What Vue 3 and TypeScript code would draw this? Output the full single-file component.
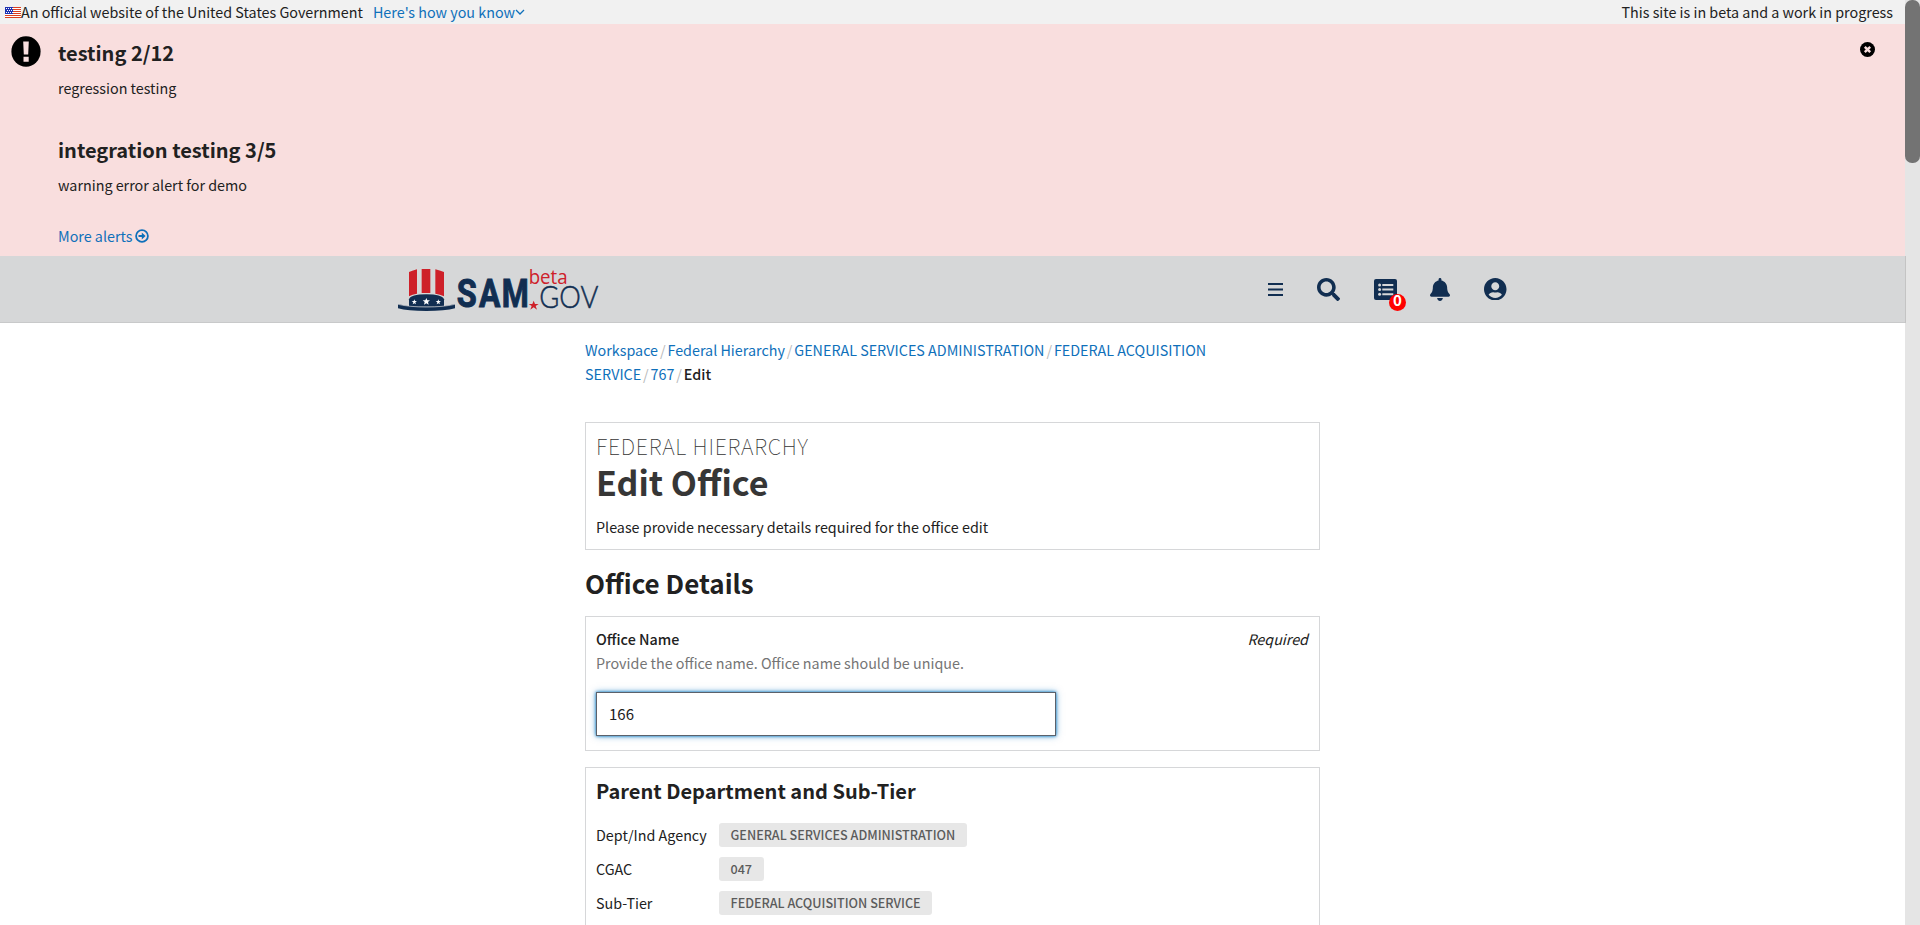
<script setup lang="ts">
interface Crumb {
  label: string
  current?: boolean
}
interface Alert {
  title: string
  text: string
}
interface Field {
  label: string
  value: string
}

const alerts: Alert[] = [
  { title: 'testing 2/12', text: 'regression testing' },
  { title: 'integration testing 3/5', text: 'warning error alert for demo' },
]

const crumbs: Crumb[] = [
  { label: 'Workspace' },
  { label: 'Federal Hierarchy' },
  { label: 'GENERAL SERVICES ADMINISTRATION' },
  { label: 'FEDERAL ACQUISITION SERVICE' },
  { label: '767' },
  { label: 'Edit', current: true },
]

const parents: Field[] = [
  { label: 'Dept/Ind Agency', value: 'GENERAL SERVICES ADMINISTRATION' },
  { label: 'CGAC', value: '047' },
  { label: 'Sub-Tier', value: 'FEDERAL ACQUISITION SERVICE' },
]

const officeName = '166'
</script>

<template>
  <div class="window">
    <div class="page">
      <div class="gov-bar">
        <svg class="flag" viewBox="0 0 16 11">
          <rect width="16" height="11" fill="#fff" />
          <path d="M0 .5H16M0 2.5H16M0 4.5H16M0 6.5H16M0 8.5H16M0 10.5H16" stroke="#db3e1f" />
          <rect width="8" height="7" fill="#1e33b1" />
          <path
            d="M1 1.5H8M2 3.5H8M1 5.5H8"
            stroke="#fff"
            stroke-dasharray="1 1"
          />
        </svg>
        <span class="official">An official website of the United States Government</span>
        <a class="know">Here's how you know</a>
        <svg class="chevron" viewBox="0 0 10 6"><path d="M1 1l4 4 4-4" /></svg>
        <span class="beta-note">This site is in beta and a work in progress</span>
      </div>

      <section class="alerts">
        <svg class="warn" viewBox="0 0 30 31">
          <ellipse cx="15" cy="15.5" rx="14.6" ry="15.3" />
          <path d="M12.2 5.4h5.6l-.6 13h-4.4zM12.5 20.7h5.2v5h-5.2z" fill="#f9dede" />
        </svg>
        <div class="alert-list">
          <article v-for="a in alerts" :key="a.title" class="alert">
            <h3>{{ a.title }}</h3>
            <p>{{ a.text }}</p>
          </article>
          <a class="more">
            <span>More alerts</span>
            <svg viewBox="0 0 14 14">
              <circle cx="7" cy="7" r="5.9" fill="none" stroke="#0f70ba" stroke-width="1.8" />
              <path d="M3.5 6h3.3V3.6L10.6 7l-3.8 3.4V8H3.5z" fill="#0f70ba" />
            </svg>
          </a>
        </div>
        <svg class="close" viewBox="0 0 15 15">
          <circle cx="7.5" cy="7.5" r="7.5" />
          <path d="M4.8 4.8l5.4 5.4M10.2 4.8l-5.4 5.4" stroke="#f9dede" stroke-width="2.4" />
        </svg>
      </section>

      <header class="site-header">
        <svg class="logo" viewBox="48 33 612 144">
          <g fill="#ce2029">
            <path d="M87 51q12-5 24-8v73q-14 2-24 8zM125 42h26v72h-26zM166 43q13 3 26 8v73q-12-6-26-8z" />
            <path d="M461 137l4 10h11l-9 6 4 11-10-7-10 7 4-11-9-6h11z" />
          </g>
          <g fill="#112e51">
            <path d="M87 133q5-15 52-15t53 15v22H87z" />
            <path d="M54 147q30 9 85 9t86-9v13q-30 8-86 8t-85-8z" />
          </g>
          <path d="M54 148q34 8 85 8t86-8" fill="none" stroke="#d6d7d8" stroke-width="2" />
          <g fill="#fff">
            <path d="M139 129l3 7h8l-6 5 2 8-7-4-7 4 2-8-6-5h8z" />
            <path d="M103 133l2 5h6l-5 4 2 6-5-3-5 3 2-6-5-4h6z" />
            <path d="M175 133l2 5h6l-5 4 2 6-5-3-5 3 2-6-5-4h6z" />
          </g>
          <text class="l-sam" y="156"><tspan x="230" textLength="60" lengthAdjust="spacingAndGlyphs">S</tspan><tspan x="297" textLength="64" lengthAdjust="spacingAndGlyphs">A</tspan><tspan x="365" textLength="81" lengthAdjust="spacingAndGlyphs">M</tspan></text>
          <text class="l-gov" x="478" y="159" textLength="177" lengthAdjust="spacingAndGlyphs">GOV</text>
          <text class="l-beta" x="446" y="87" textLength="117" lengthAdjust="spacingAndGlyphs">beta</text>
        </svg>
        <nav class="tools">
          <svg class="bars" viewBox="0 0 15 13">
            <path d="M0 1h15M0 6.5h15M0 12h15" />
          </svg>
          <svg class="search" viewBox="0 0 512 512">
            <path d="M505 442.7L405.3 343c-4.5-4.5-10.6-7-17-7H372c27.6-35.3 44-79.7 44-128C416 93.1 322.9 0 208 0S0 93.1 0 208s93.1 208 208 208c48.3 0 92.7-16.4 128-44v16.3c0 6.4 2.5 12.5 7 17l99.7 99.7c9.4 9.4 24.6 9.4 33.9 0l28.3-28.3c9.4-9.4 9.4-24.6.1-34zM208 336c-70.7 0-128-57.2-128-128 0-70.7 57.2-128 128-128 70.7 0 128 57.2 128 128 0 70.7-57.2 128-128 128z" />
          </svg>
          <span class="requests">
            <svg viewBox="0 0 23 21">
              <rect width="23" height="21" rx="2" />
              <g fill="#d6d7d8">
                <circle cx="5.6" cy="6" r="1.5" />
                <circle cx="5.6" cy="10.6" r="1.5" />
                <circle cx="5.6" cy="15.2" r="1.5" />
                <path d="M8.3 5h11v2h-11zM8.3 9.6h11v2h-11zM8.3 14.2h11v2h-11z" />
              </g>
            </svg>
            <span class="badge">0</span>
          </span>
          <svg class="bell" viewBox="0 0 448 512">
            <path d="M224 512c35.32 0 63.97-28.65 63.97-64H160.03c0 35.35 28.65 64 63.97 64zm215.39-149.71c-19.32-20.76-55.47-51.99-55.47-154.29 0-77.7-54.48-139.9-127.94-155.16V32c0-17.67-14.32-32-31.98-32s-31.98 14.33-31.98 32v20.84C118.56 68.1 64.08 130.3 64.08 208c0 102.3-36.15 133.53-55.47 154.29-6 6.45-8.66 14.16-8.61 21.71.11 16.4 12.98 32 32.1 32h383.8c19.12 0 32-15.6 32.1-32 .05-7.55-2.61-15.27-8.61-21.71z" />
          </svg>
          <svg class="user" viewBox="0 8 496 496">
            <path d="M248 8C111 8 0 119 0 256s111 248 248 248 248-111 248-248S385 8 248 8zm0 96c48.6 0 88 39.4 88 88s-39.4 88-88 88-88-39.4-88-88 39.4-88 88-88zm0 344c-58.7 0-111.3-26.6-146.5-68.2 18.8-35.4 55.6-59.8 98.5-59.8 2.4 0 4.8.4 7.1 1.1 13 4.2 26.6 6.9 40.9 6.9 14.3 0 28-2.7 40.9-6.9 2.3-.7 4.7-1.1 7.1-1.1 42.9 0 79.7 24.4 98.5 59.8C359.3 421.4 306.7 448 248 448z" />
          </svg>
        </nav>
      </header>

      <main class="content">
        <nav class="crumbs">
          <template v-for="(c, i) in crumbs" :key="c.label">
            <span v-if="i > 0" class="slash">/</span>
            <span v-if="c.current" class="current">{{ c.label }}</span>
            <a v-else>{{ c.label }}</a>
          </template>
        </nav>

        <section class="card intro">
          <div class="eyebrow">FEDERAL HIERARCHY</div>
          <h1>Edit Office</h1>
          <p>Please provide necessary details required for the office edit</p>
        </section>

        <h2>Office Details</h2>

        <section class="card office">
          <div class="label-row">
            <label>Office Name</label>
            <em>Required</em>
          </div>
          <p class="hint">Provide the office name. Office name should be unique.</p>
          <div class="input">{{ officeName }}</div>
        </section>

        <section class="card parent">
          <h3>Parent Department and Sub-Tier</h3>
          <dl>
            <div v-for="p in parents" :key="p.label" class="field">
              <dt>{{ p.label }}</dt>
              <dd>{{ p.value }}</dd>
            </div>
          </dl>
        </section>
      </main>
    </div>
    <div class="scrollbar"><div class="thumb"></div></div>
  </div>
</template>

<style>
html,
body {
  margin: 0;
  overflow: hidden;
}
</style>

<style scoped>
.window {
  display: grid;
  grid-template-columns: minmax(0, 1fr) 15px;
  height: 925px;
  overflow: hidden;
  background: #fff;
  color: #212121;
  font-family: "Noto Sans CJK SC", "Open Sans", sans-serif;
  font-size: 14.33px;
  line-height: 24px;
}
.page {
  height: 925px;
}
h1, h2, h3, p, dl, dd {
  margin: 0;
}
svg {
  display: block;
  flex: none;
}
a {
  color: #0f70ba;
}
.scrollbar {
  background: #e5e5e5;
}
.thumb {
  height: 163px;
  border-radius: 7px;
  background: #737373;
}
.gov-bar {
  display: flex;
  align-items: center;
  height: 24px;
  padding: 0 12px 0 5px;
  background: #f1f1f1;
  white-space: nowrap;
}
.flag {
  width: 16px;
  height: 11px;
}
.know {
  margin-left: 10px;
}
.chevron {
  width: 10px;
  height: 6px;
  fill: none;
  stroke: #0f70ba;
  stroke-width: 1.3;
}
.beta-note {
  margin-left: auto;
}
.alerts {
  display: flex;
  align-items: flex-start;
  box-sizing: border-box;
  height: 232px;
  padding: 12px 30px 0 10.5px;
  background: #f9dede;
}
.warn {
  width: 30px;
  height: 31px;
}
.alert-list {
  flex: 1;
  margin: 4px 0 0 17.5px;
}
.alert {
  height: 97px;
}
.alert:nth-of-type(2) {
  height: 87px;
}
.alert h3 {
  font-size: 20px;
  line-height: 26px;
}
.alert p {
  margin-top: 10px;
}
.more {
  display: flex;
  align-items: center;
  gap: 3px;
}
.more svg {
  width: 14px;
  height: 14px;
}
.close {
  width: 15px;
  height: 15px;
  margin-top: 6px;
}
.site-header {
  position: relative;
  display: flex;
  align-items: flex-start;
  box-sizing: border-box;
  height: 67px;
  border-bottom: 1px solid #c8c9ca;
  padding: 10px 0 0 396px;
  background: #d6d7d8;
}
.site-header::after {
  content: "";
  position: absolute;
  top: 0;
  right: -1px;
  width: 1px;
  height: 67px;
  background: #c4c4c4;
}
.logo {
  width: 204px;
  height: 48px;
  overflow: visible;
}
.l-sam {
  font: bold 119px Roboto, sans-serif;
  fill: #112e51;
  stroke: #112e51;
  stroke-width: 3;
}
.l-gov {
  font: 300 93px Lato, sans-serif;
  fill: #112e51;
  stroke: #112e51;
  stroke-width: 1.5;
}
.l-beta {
  font: 62px "Open Sans", sans-serif;
  fill: #ce2029;
}
.tools {
  display: flex;
  align-items: center;
  height: 48px;
  margin: -1px 0 0 668px;
  fill: #112e51;
}
.bars {
  width: 15px;
  height: 13px;
  margin-right: 34px;
  stroke: #112e51;
  stroke-width: 2;
}
.search {
  width: 23px;
  height: 23px;
  margin-right: 34px;
}
.requests {
  position: relative;
  margin-right: 33px;
}
.requests svg {
  width: 23px;
  height: 21px;
}
.badge {
  position: absolute;
  left: 15px;
  top: 15px;
  width: 17px;
  height: 17px;
  border-radius: 50%;
  background: #f00;
  color: #fff;
  font-size: 15px;
  font-weight: 700;
  line-height: 12px;
  text-align: center;
}
.bell {
  width: 20px;
  height: 23px;
  margin-right: 34px;
}
.user {
  width: 22.5px;
  height: 22.5px;
}
.content {
  width: 735px;
  margin-left: 585px;
}
.crumbs {
  width: 650px;
  height: 48px;
  padding: 15px 0 36px;
}
.slash {
  margin: 0 1.9px;
  color: #b8b9ba;
}
.current {
  font-weight: 500;
}
.card {
  box-sizing: border-box;
  border: 1px solid #d6d7d9;
  padding: 0 10px;
}
.intro {
  height: 128px;
}
.eyebrow {
  margin-top: 11px;
  color: #333;
  font-size: 21.6px;
  font-weight: 100;
  letter-spacing: 0.75px;
  line-height: 24px;
}
h1 {
  color: #363636;
  font-size: 34px;
  line-height: 48px;
}
.intro p {
  margin-top: 9px;
}
h2 {
  margin: 15px 0 16px;
  font-size: 26px;
  line-height: 35px;
}
.office {
  height: 135px;
  padding-top: 10px;
}
.label-row {
  display: flex;
  justify-content: space-between;
  padding-right: 1px;
}
.label-row label {
  font-weight: 500;
}
.hint {
  color: #757575;
}
.input {
  box-sizing: border-box;
  width: 460px;
  height: 44px;
  margin-top: 17px;
  border: 1px solid #5b616b;
  padding: 9px 12px;
  box-shadow: 0 0 3px #0071bc, 0 0 7px rgba(0, 113, 188, 0.5);
  font-size: 15px;
}
.parent {
  height: 200px;
  margin-top: 16px;
}
.parent h3 {
  margin: 10px 0 19px;
  font-size: 20px;
  line-height: 26px;
}
.field {
  display: flex;
  height: 34px;
}
.field dt {
  width: 123px;
}
.field dd {
  height: 24px;
  border-radius: 3px;
  padding: 0 11.5px;
  background: #e7e7e7;
  color: #5b5b5b;
  font-size: 12.6px;
  font-weight: 500;
}
</style>
